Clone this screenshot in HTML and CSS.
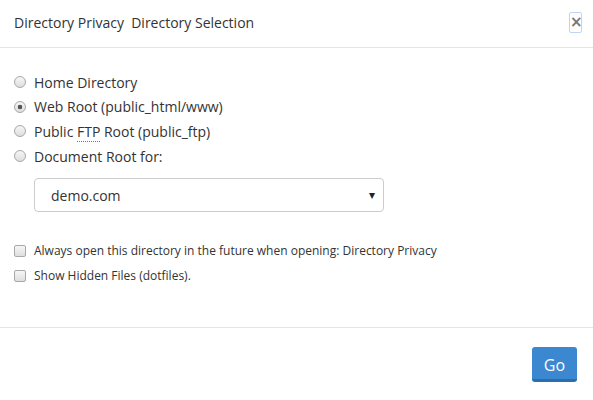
FILE: index.html
```html
<!DOCTYPE html>
<html>
<head>
<meta charset="utf-8">
<link rel="stylesheet" href="styles.css">
</head>
<body>
<div class="modal">
  <div class="modal-header">
    <h4 class="modal-title">Directory Privacy&nbsp; Directory Selection</h4>
    <button class="close" type="button">×</button>
  </div>
  <div class="modal-body">
    <div class="radios">
      <label class="opt"><input type="radio" name="dir"><span>Home Directory</span></label>
      <label class="opt"><input type="radio" name="dir" checked><span>Web Root (public_html/www)</span></label>
      <label class="opt"><input type="radio" name="dir"><span>Public <abbr title="File Transfer Protocol">FTP</abbr> Root (public_ftp)</span></label>
      <label class="opt"><input type="radio" name="dir"><span>Document Root for:</span></label>
    </div>
    <div class="select">
      <span class="select-value">demo.com</span>
      <span class="caret">▾</span>
    </div>
    <div class="checks">
      <label class="chk"><input type="checkbox"><span>Always open this directory in the future when opening: Directory Privacy</span></label>
      <label class="chk"><input type="checkbox"><span>Show Hidden Files (dotfiles).</span></label>
    </div>
  </div>
  <div class="modal-footer">
    <button class="btn-go" type="button">Go</button>
  </div>
</div>
</body>
</html>
```
FILE: styles.css
```css
* { box-sizing: border-box; }
html, body { margin: 0; padding: 0; background: #fff; }
body {
  font-family: "Open Sans", "Liberation Sans", sans-serif;
  color: #333;
  width: 593px;
  height: 400px;
  overflow: hidden;
}
.modal { display: flex; flex-direction: column; height: 400px; }
.modal-header {
  display: flex;
  align-items: center;
  justify-content: space-between;
  padding: 13px 11px 14px 14px;
  border-bottom: 1px solid #e5e5e5;
  height: 48px;
}
.modal-title {
  margin: 0;
  font-size: 14px;
  font-weight: 400;
  line-height: 20px;
  color: #333;
}
.close {
  width: 13px;
  height: 21px;
  padding: 0;
  margin: 0;
  border: 1px solid #bcd6f5;
  border-radius: 2px;
  background: #fff;
  color: #777;
  font-family: "DejaVu Sans", sans-serif;
  font-weight: 700;
  font-size: 15px;
  line-height: 17px;
  text-align: center;
  margin-top: -1px;
}
.modal-body {
  padding: 22px 14px 0 14px;
  height: 280px;
  border-bottom: 1px solid #e5e5e5;
}
.radios { display: flex; flex-direction: column; }
.opt, .chk {
  display: flex;
  align-items: center;
  gap: 8px;
  font-size: 14px;
  height: 24.6px;
}
.chk { font-size: 12px; height: 25px; }
.opt input, .chk input {
  -webkit-appearance: none;
  appearance: none;
  margin: 0;
  width: 12px;
  height: 12px;
  flex: none;
  border: 1px solid #a8a8a8;
  background: linear-gradient(#f6f6f6, #dedede);
}
.opt input { border-radius: 50%; }
.opt input:checked {
  background: radial-gradient(circle, #555 0, #555 2px, transparent 2.6px), linear-gradient(#f6f6f6, #dedede);
}
.chk input { border-radius: 2px; }
abbr {
  text-decoration: none;
  border-bottom: 1px dotted #777;
}
.select {
  margin: 10px 0 0 20px;
  width: 350px;
  height: 34px;
  border: 1px solid #ccc;
  border-radius: 4px;
  display: flex;
  align-items: center;
  justify-content: space-between;
  padding: 0 8px 0 16px;
  font-size: 14px;
}
.caret { font-size: 12px; color: #222; font-family: "DejaVu Sans", sans-serif; }
.checks { margin-top: 26px; display: flex; flex-direction: column; }
.modal-footer {
  display: flex;
  justify-content: flex-end;
  padding: 19px 16px 0 0;
}
.btn-go {
  width: 45px;
  height: 35px;
  background: #3b87d0;
  border: 0;
  border-bottom: 3px solid #2b6eae;
  border-radius: 3px;
  color: #fff;
  font-family: "Open Sans", sans-serif;
  font-size: 16px;
  padding: 4px 0 0 0;
}
```
